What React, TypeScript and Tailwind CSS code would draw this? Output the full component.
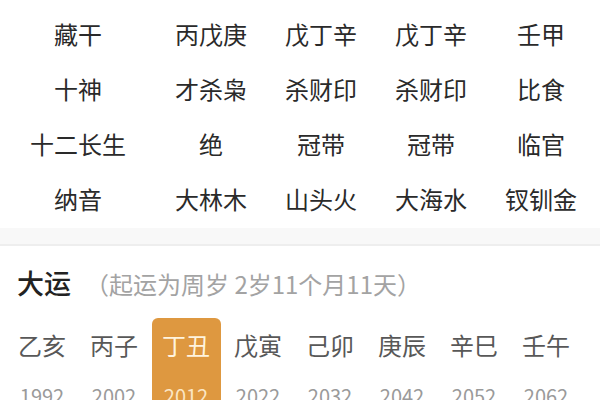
import React from "react";

const rows: string[][] = [
  ["藏干", "丙戊庚", "戊丁辛", "戊丁辛", "壬甲"],
  ["十神", "才杀枭", "杀财印", "杀财印", "比食"],
  ["十二长生", "绝", "冠带", "冠带", "临官"],
  ["纳音", "大林木", "山头火", "大海水", "钗钏金"],
];

const yun = [
  ["乙亥", "1992"],
  ["丙子", "2002"],
  ["丁丑", "2012"],
  ["戊寅", "2022"],
  ["己卯", "2032"],
  ["庚辰", "2042"],
  ["辛巳", "2052"],
  ["壬午", "2062"],
];

const font = { fontFamily: '"Noto Sans CJK SC", "Noto Sans", sans-serif' };

export default function App() {
  return (
    <div className="w-[600px] h-[400px] overflow-hidden bg-white" style={font}>
      <div className="pt-[6px] pb-[2px] bg-white">
        {rows.map((r, i) => (
          <div key={i} className="grid grid-cols-[156px_repeat(4,110px)] h-[55px] items-center">
            {r.map((c, j) => (
              <div key={j} className="text-center text-[24px] leading-[30px] text-[#2a2a2a]">
                {c}
              </div>
            ))}
          </div>
        ))}
      </div>
      <div className="h-[16px] bg-[#f8f8f8]" />
      <div className="h-[2px] bg-[#eeeeee]" />
      <div className="flex items-baseline pl-[17px] mt-[19px]">
        <span className="text-[27px] leading-[36px] font-medium text-[#222222]">大运</span>
        <span className="ml-[14px] text-[24px] leading-[30px] text-[#a3a3a3]">（起运为周岁 2岁11个月11天）</span>
      </div>
      <div className="flex pl-[6px] mt-[17px]">
        {yun.map(([g, y], i) => (
          <div key={i} className="w-[72px] flex justify-center">
            <div
              className={
                i === 2
                  ? "w-[69px] h-[90px] rounded-[6px] bg-[#de9840] flex flex-col items-center pt-[12px]"
                  : "w-[69px] h-[90px] flex flex-col items-center pt-[12px]"
              }
            >
              <span className={i === 2 ? "text-[24px] leading-[30px] text-[#fff4de]" : "text-[24px] leading-[30px] text-[#585858]"}>
                {g}
              </span>
              <span className={i === 2 ? "mt-[24px] text-[20px] leading-[24px] text-[#fbe6c4]" : "mt-[24px] text-[20px] leading-[24px] text-[#9a9a9a]"}>
                {y}
              </span>
            </div>
          </div>
        ))}
      </div>
    </div>
  );
}
